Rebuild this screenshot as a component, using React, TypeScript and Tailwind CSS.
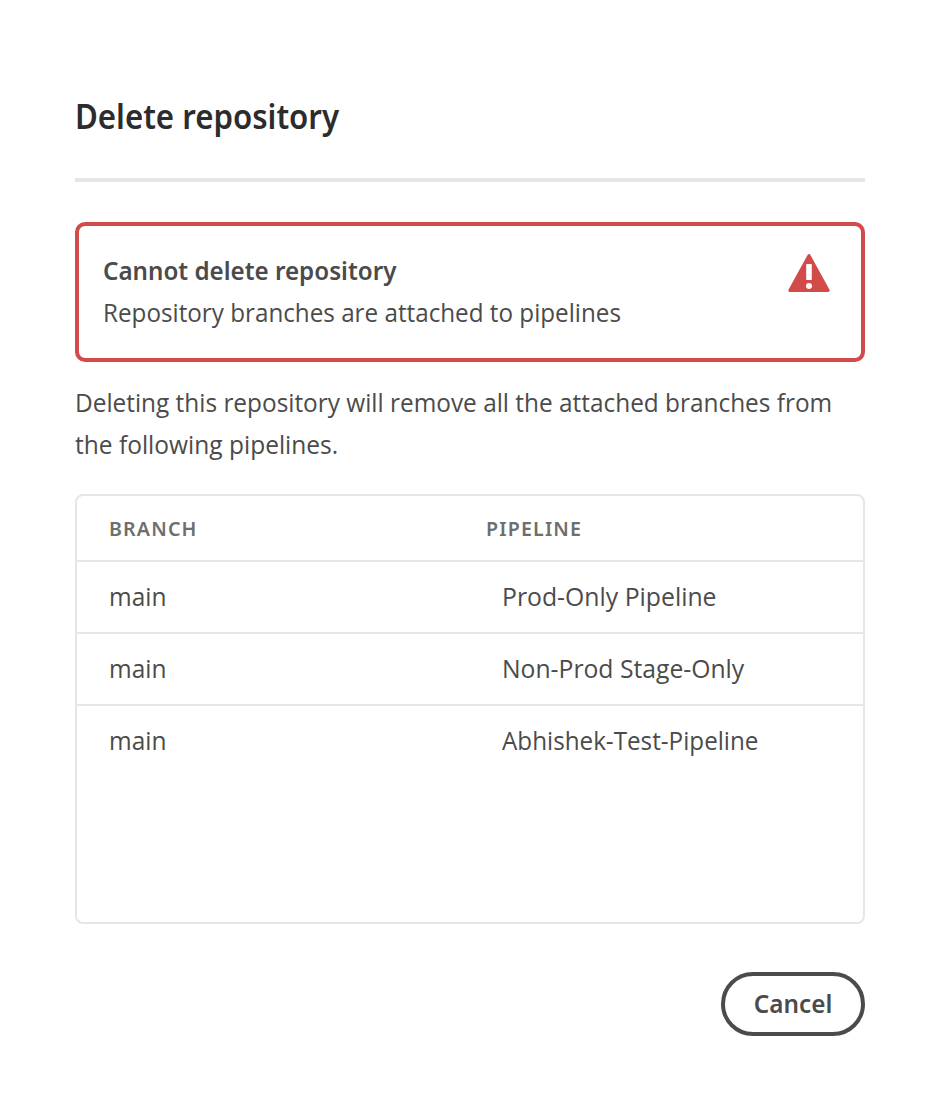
import React from "react";

const rows = [
  { branch: "main", pipeline: "Prod-Only Pipeline", scale: "scale-x-[.953]" },
  { branch: "main", pipeline: "Non-Prod Stage-Only", scale: "scale-x-[.95]" },
  { branch: "main", pipeline: "Abhishek-Test-Pipeline", scale: "scale-x-[.932]" },
];

export default function App() {
  return (
    <main className="flex h-[1112px] w-[940px] flex-col bg-white px-[75px] pt-[92px] font-['Open_Sans','Noto_Sans',sans-serif] text-[#4b4b4b]">
      <h1 className="h-[86px] font-['Noto_Sans',sans-serif] text-[34px] leading-[48px] font-semibold text-[#2c2c2c]">
        <span className="inline-block origin-left scale-x-[.918]">Delete repository</span>
      </h1>
      <div className="h-1 shrink-0 bg-[#e6e6e6]" />
      <section className="mt-10 flex h-[140px] shrink-0 justify-between rounded-[10px] border-4 border-[#d24b4b] pl-6 pt-[23px]">
        <div className="text-[26px] leading-[42px]">
          <h2 className="font-['Noto_Sans',sans-serif] font-semibold"><span className="inline-block origin-left scale-x-[.93]">Cannot delete repository</span></h2>
          <p><span className="inline-block origin-left scale-x-[.932]">Repository branches are attached to pipelines</span></p>
        </div>
        <svg className="mt-[5px] mr-[31px] h-[38px] w-[42px]" viewBox="0 0 42 38">
          <path d="M19.7.8a1.5 1.5 0 0 1 2.6 0l19.2 34.9A1.5 1.5 0 0 1 40.2 38H1.8a1.5 1.5 0 0 1-1.3-2.3Z" fill="#d24b4b" />
          <rect x="18.2" y="10" width="5.6" height="16" rx=".7" fill="white" />
          <circle cx="21" cy="32" r="3" fill="white" />
        </svg>
      </section>
      <p className="mt-[19px] flex h-[85px] shrink-0 flex-col items-start text-[26px] leading-[42px] whitespace-nowrap">
        <span className="origin-left scale-x-[.938]">Deleting this repository will remove all the attached branches from</span>
        <span className="origin-left scale-x-[.943]">the following pipelines.</span>
      </p>
      <section className="mt-7 h-[430px] shrink-0 rounded-lg border-2 border-[#e6e6e6]">
        <div className="flex h-[66px] border-b-2 border-[#e6e6e6] pl-8 font-['Noto_Sans',sans-serif] text-[20px] leading-[66px] font-semibold tracking-[1.2px] text-[#6e6e6e]">
          <div className="w-[377px]"><span className="inline-block origin-left scale-x-[.98]">BRANCH</span></div>
          <div><span className="inline-block origin-left scale-x-[.98]">PIPELINE</span></div>
        </div>
        {rows.map((row) => (
          <div key={row.pipeline} className="flex h-[72px] border-b-2 border-[#e6e6e6] pl-8 text-[26px] leading-[68px] last:border-b-0">
            <div className="w-[393px]"><span className="inline-block origin-left scale-x-[.94]">{row.branch}</span></div>
            <div><span className={`inline-block origin-left ${row.scale}`}>{row.pipeline}</span></div>
          </div>
        ))}
      </section>
      <button className="mt-12 h-16 w-[144px] shrink-0 self-end rounded-full border-4 border-[#4b4b4b] pb-0.5 font-['Noto_Sans',sans-serif] text-[26px] leading-[54px] font-semibold">
        <span className="inline-block scale-x-[.935]">Cancel</span>
      </button>
    </main>
  );
}
